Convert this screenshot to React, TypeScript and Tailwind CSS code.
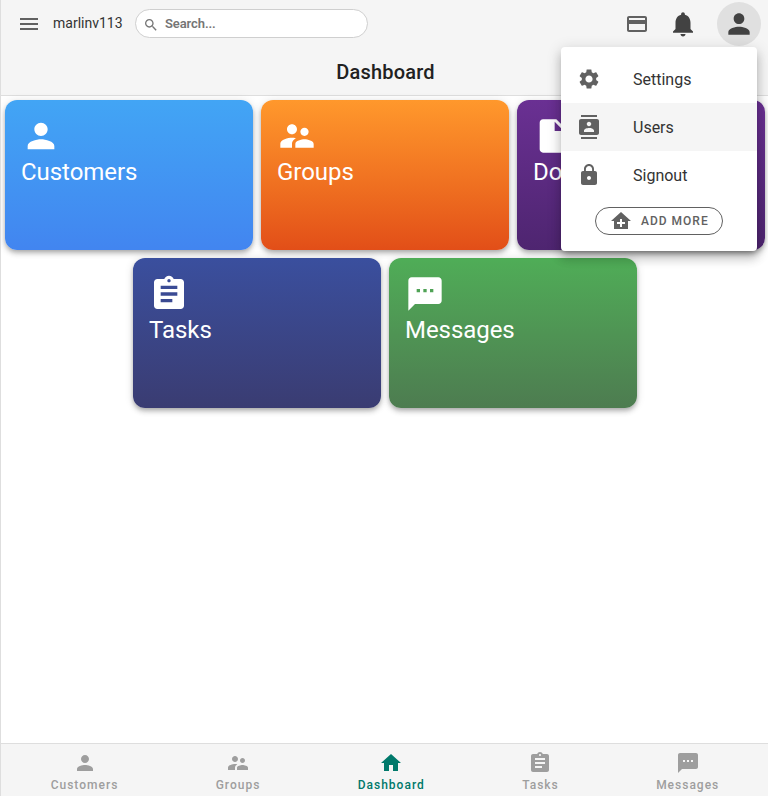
const P = {
  person: "M12 12c2.21 0 4-1.79 4-4s-1.79-4-4-4-4 1.79-4 4 1.79 4 4 4zm0 2c-2.67 0-8 1.34-8 4v2h16v-2c0-2.66-5.33-4-8-4z",
  group: "M16.5 12c1.38 0 2.49-1.12 2.49-2.5S17.88 7 16.5 7C15.12 7 14 8.12 14 9.5s1.12 2.5 2.5 2.5zM9 11c1.66 0 2.99-1.34 2.99-3S10.66 5 9 5C7.34 5 6 6.34 6 8s1.34 3 3 3zm7.5 3c-1.83 0-5.5.92-5.5 2.75V19h11v-2.25c0-1.83-3.67-2.75-5.5-2.75zM9 13c-2.33 0-7 1.17-7 3.5V19h7v-2.25c0-.85.33-2.34 2.37-3.47C10.5 13.1 9.66 13 9 13z",
  file: "M6 2c-1.1 0-1.99.9-1.99 2L4 20c0 1.1.89 2 1.99 2H18c1.1 0 2-.9 2-2V8l-6-6H6zm7 7V3.5L18.5 9H13z",
  task: "M19 3h-4.18C14.4 1.84 13.3 1 12 1c-1.3 0-2.4.84-2.82 2H5c-1.1 0-2 .9-2 2v14c0 1.1.9 2 2 2h14c1.1 0 2-.9 2-2V5c0-1.1-.9-2-2-2zm-7 0c.55 0 1 .45 1 1s-.45 1-1 1-1-.45-1-1 .45-1 1-1zm2 14H7v-2h7v2zm3-4H7v-2h10v2zm0-4H7V7h10v2z",
  sms: "M20 2H4c-1.1 0-1.99.9-1.99 2L2 22l4-4h14c1.1 0 2-.9 2-2V4c0-1.1-.9-2-2-2zM9 11H7V9h2v2zm4 0h-2V9h2v2zm4 0h-2V9h2v2z",
  home: "M10 20v-6h4v6h5v-8h3L12 3 2 12h3v8z",
  addHome: "M12 3 2 12h3v8h14v-8h3L12 3zm4 12h-3v3h-2v-3H8v-2h3v-3h2v3h3v2z",
  menu: "M3 18h18v-2H3v2zm0-5h18v-2H3v2zm0-7v2h18V6H3z",
  search: "M15.5 14h-.79l-.28-.27C15.41 12.59 16 11.11 16 9.5 16 5.91 13.09 3 9.5 3S3 5.91 3 9.5 5.91 16 9.5 16c1.61 0 3.09-.59 4.23-1.57l.27.28v.79l5 4.99L20.49 19l-4.99-5zm-6 0C7.01 14 5 11.99 5 9.5S7.01 5 9.5 5 14 7.01 14 9.5 11.99 14 9.5 14z",
  card: "M20 4H4c-1.11 0-1.99.89-1.99 2L2 18c0 1.11.89 2 2 2h16c1.11 0 2-.89 2-2V6c0-1.11-.89-2-2-2zm0 14H4v-6h16v6zm0-10H4V6h16v2z",
  bell: "M12 22c1.1 0 2-.9 2-2h-4c0 1.1.89 2 2 2zm6-6v-5c0-3.07-1.64-5.64-4.5-6.32V4c0-.83-.67-1.5-1.5-1.5s-1.5.67-1.5 1.5v.68C7.63 5.36 6 7.92 6 11v5l-2 2v1h16v-1l-2-2z",
  gear: "M19.14 12.94c.04-.3.06-.61.06-.94 0-.32-.02-.64-.07-.94l2.03-1.58c.18-.14.23-.41.12-.61l-1.92-3.32c-.12-.22-.37-.29-.59-.22l-2.39.96c-.5-.38-1.03-.7-1.62-.94l-.36-2.54c-.04-.24-.24-.41-.48-.41h-3.84c-.24 0-.43.17-.47.41l-.36 2.54c-.59.24-1.13.57-1.62.94l-2.39-.96c-.22-.08-.47 0-.59.22L2.74 8.87c-.12.21-.08.47.12.61l2.03 1.58c-.05.3-.09.63-.09.94s.02.64.07.94l-2.03 1.58c-.18.14-.23.41-.12.61l1.92 3.32c.12.22.37.29.59.22l2.39-.96c.5.38 1.03.7 1.62.94l.36 2.54c.05.24.24.41.48.41h3.84c.24 0 .44-.17.47-.41l.36-2.54c.59-.24 1.13-.56 1.62-.94l2.39.96c.22.08.47 0 .59-.22l1.92-3.32c.12-.22.07-.47-.12-.61l-2.01-1.58zM12 15.6c-1.98 0-3.6-1.62-3.6-3.6s1.62-3.6 3.6-3.6 3.6 1.62 3.6 3.6-1.62 3.6-3.6 3.6z",
  contacts: "M20 0H4v2h16V0zM4 24h16v-2H4v2zM20 4H4c-1.1 0-2 .9-2 2v12c0 1.1.9 2 2 2h16c1.1 0 2-.9 2-2V6c0-1.1-.9-2-2-2zm-8 2.75c1.24 0 2.25 1.01 2.25 2.25s-1.01 2.25-2.25 2.25S9.75 10.24 9.75 9 10.76 6.75 12 6.75zM17 17H7v-1.5c0-1.67 3.33-2.5 5-2.5s5 .83 5 2.5V17z",
  lock: "M18 8h-1V6c0-2.76-2.24-5-5-5S7 3.24 7 6v2H6c-1.1 0-2 .9-2 2v10c0 1.1.9 2 2 2h12c1.1 0 2-.9 2-2V10c0-1.1-.9-2-2-2zm-6 9c-1.1 0-2-.9-2-2s.9-2 2-2 2 .9 2 2-.9 2-2 2zm3.1-9H8.9V6c0-1.71 1.39-3.1 3.1-3.1 1.71 0 3.1 1.39 3.1 3.1v2z",
};

function Icon({ d, className }: { d: string; className: string }) {
  return (
    <svg viewBox="0 0 24 24" fill="currentColor" className={className}>
      <path d={d} />
    </svg>
  );
}

const tiles = [
  { label: "Customers", icon: P.person, bg: "from-[#42a5f5] to-[#4285f0]" },
  { label: "Groups", icon: P.group, bg: "from-[#ff982c] to-[#e24e18]" },
  { label: "Documents", icon: P.file, bg: "from-[#6a3093] to-[#4e2570]" },
  { label: "Tasks", icon: P.task, bg: "from-[#3a4f9e] to-[#3a3c72]" },
  { label: "Messages", icon: P.sms, bg: "from-[#4fad57] to-[#4d7c50]" },
];

const nav = [
  { label: "Customers", icon: P.person },
  { label: "Groups", icon: P.group },
  { label: "Dashboard", icon: P.home, active: true },
  { label: "Tasks", icon: P.task },
  { label: "Messages", icon: P.sms },
];

const menu = [
  { label: "Settings", icon: P.gear },
  { label: "Users", icon: P.contacts, hover: true },
  { label: "Signout", icon: P.lock },
];

export default function App() {
  return (
    <div className="relative flex h-[796px] w-[768px] flex-col overflow-hidden border-l border-[#dedede] bg-white font-['Roboto',sans-serif]">
      <header className="h-[96px] shrink-0 border-b border-[#dedede] bg-[#f5f5f5]">
        <div className="flex h-[47px] items-center">
          <Icon d={P.menu} className="ml-4 h-6 w-6 shrink-0 text-[#616161]" />
          <span className="ml-3 w-[82px] shrink-0 pb-0.5 text-sm leading-[20px] text-[#333333]">marlinv113</span>
          <div className="flex h-[29px] w-[233px] shrink-0 items-center rounded-full border border-[#cfcfcf] bg-white">
            <Icon d={P.search} className="ml-[7px] mt-0.5 h-4 w-4 shrink-0 text-[#757575]" />
            <span className="ml-[6px] text-[13px] font-semibold leading-none tracking-[-0.1px] text-[#757575]">Search...</span>
          </div>
          <Icon d={P.card} className="ml-[257px] h-6 w-6 shrink-0 text-[#616161]" />
          <Icon d={P.bell} className="ml-[19px] h-[30px] w-[30px] shrink-0 text-[#424242]" />
          <div className="ml-[19px] flex h-[44px] w-[44px] shrink-0 items-center justify-center rounded-full bg-[#e0e0e0]">
            <Icon d={P.person} className="h-8 w-8 text-[#424242]" />
          </div>
        </div>
        <h1 className="flex h-[48px] items-center justify-center pl-0.5 pt-0.5 text-xl font-medium tracking-[0.2px] text-[#212121]">Dashboard</h1>
      </header>

      <main className="min-h-0 flex-1">
        <div className="flex w-[768px] flex-wrap justify-center gap-2 p-1">
          {tiles.map((t) => (
            <div
              key={t.label}
              className={`h-[150px] w-[248px] rounded-xl bg-gradient-to-b p-4 text-white shadow-[0_2px_4px_-1px_rgba(0,0,0,0.2),0_4px_5px_0_rgba(0,0,0,0.14),0_1px_10px_0_rgba(0,0,0,0.12)] ${t.bg}`}
            >
              <Icon d={t.icon} className="h-10 w-10" />
              <div className="text-2xl leading-8 tracking-[-0.05px]">{t.label}</div>
            </div>
          ))}
        </div>
      </main>

      <nav className="flex h-[53px] shrink-0 items-start justify-around border-t border-[#dedede] bg-[#f5f5f5] pl-px">
        {nav.map((n) => (
          <div
            key={n.label}
            className={`flex flex-col items-center pt-[7px] ${n.active ? "text-[#00796b]" : "text-[#9e9e9e]"}`}
          >
            <Icon d={n.icon} className="h-6 w-6" />
            <span className="text-xs font-medium leading-[20px] tracking-[1px]">{n.label}</span>
          </div>
        ))}
      </nav>

      <div className="absolute left-[560px] top-[47px] w-[196px] rounded bg-white shadow-[0_5px_5px_-3px_rgba(0,0,0,0.2),0_8px_10px_1px_rgba(0,0,0,0.14),0_3px_14px_2px_rgba(0,0,0,0.12)]">
        <div className="pt-2">
          {menu.map((m) => (
            <div key={m.label} className={`flex h-12 items-center pl-4 ${m.hover ? "bg-[#f5f5f5]" : ""}`}>
              <Icon d={m.icon} className="h-6 w-6 shrink-0 text-[#616161]" />
              <span className="ml-8 pt-0.5 text-base text-[#333333]">{m.label}</span>
            </div>
          ))}
        </div>
        <div className="flex justify-center pb-4 pt-2">
          <div className="flex h-7 w-[128px] items-center rounded-full border border-[#616161] pl-[13px]">
            <Icon d={P.addHome} className="h-6 w-6 shrink-0 text-[#616161]" />
            <span className="ml-2 text-xs font-medium tracking-[1px] text-[#616161]">ADD MORE</span>
          </div>
        </div>
      </div>
    </div>
  );
}
